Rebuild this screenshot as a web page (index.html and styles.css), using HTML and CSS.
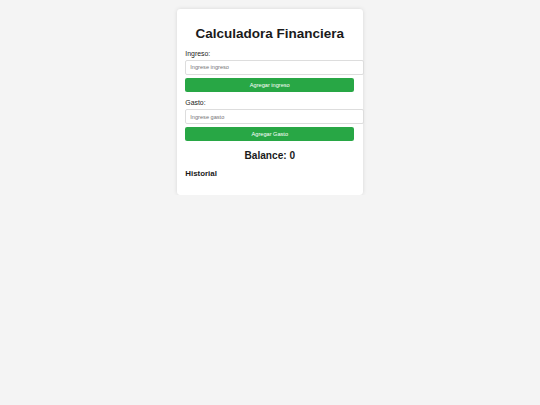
FILE: index.html
```html
<!DOCTYPE html>
<html lang="es">
<head>
<meta charset="utf-8">
<title>Calculadora Financiera</title>
<link rel="stylesheet" href="styles.css">
</head>
<body>
<div class="card">
  <h1 class="title">Calculadora Financiera</h1>
  <div class="group">
    <label class="label" for="ingreso">Ingreso:</label>
    <input class="field" id="ingreso" type="number" placeholder="Ingrese ingreso">
    <button class="btn" type="button">Agregar ingreso</button>
  </div>
  <div class="group">
    <label class="label" for="gasto">Gasto:</label>
    <input class="field" id="gasto" type="number" placeholder="Ingrese gasto">
    <button class="btn" type="button">Agregar Gasto</button>
  </div>
  <h2 class="balance">Balance: 0</h2>
  <h3 class="history">Historial</h3>
  <ul class="list"></ul>
</div>
</body>
</html>
```

FILE: styles.css
```css
html, body {
  margin: 0;
  padding: 0;
}
body {
  background: #f4f4f4;
  font-family: "Liberation Sans", Arial, sans-serif;
  font-size: 6.75px;
  color: #222;
}
.card {
  width: 169px;
  margin: 8.5px auto 0;
  padding: 8.6px 8.8px 8.6px 8.4px;
  background: #fff;
  border-radius: 3.4px;
  box-shadow: 0 0 4.2px rgba(0, 0, 0, 0.12);
}
.title {
  margin: 9px 0 8.5px;
  font-size: 13.5px;
  font-weight: bold;
  text-align: center;
  color: #1a1a1a;
}
.group {
  margin-bottom: 7.2px;
}
.label {
  display: block;
  font-size: 6.9px;
  line-height: 8px;
  color: #1a1a1a;
}
.field {
  display: block;
  width: 100%;
  margin: 2.2px 0 0;
  padding: 3.6px 4px;
  border: 1px solid #ddd;
  border-radius: 2px;
  font-family: "Liberation Sans", Arial, sans-serif;
  font-size: 5.625px;
  background: #fff;
  color: #222;
  outline: none;
}
.field::placeholder {
  color: #757575;
}
.btn {
  display: block;
  width: 100%;
  margin-top: 2.7px;
  padding: 4.1px;
  border: none;
  border-radius: 2.1px;
  background: #28a745;
  color: #fff;
  font-family: "Liberation Sans", Arial, sans-serif;
  font-size: 5.625px;
}
.balance {
  margin: 8.4px 0;
  font-size: 10.125px;
  font-weight: bold;
  text-align: center;
  color: #1a1a1a;
}
.history {
  margin: 8.4px 0;
  font-size: 7.9px;
  font-weight: bold;
  color: #1a1a1a;
}
.list {
  margin: 6.75px 0 0;
  padding: 0;
  list-style: none;
}
```
